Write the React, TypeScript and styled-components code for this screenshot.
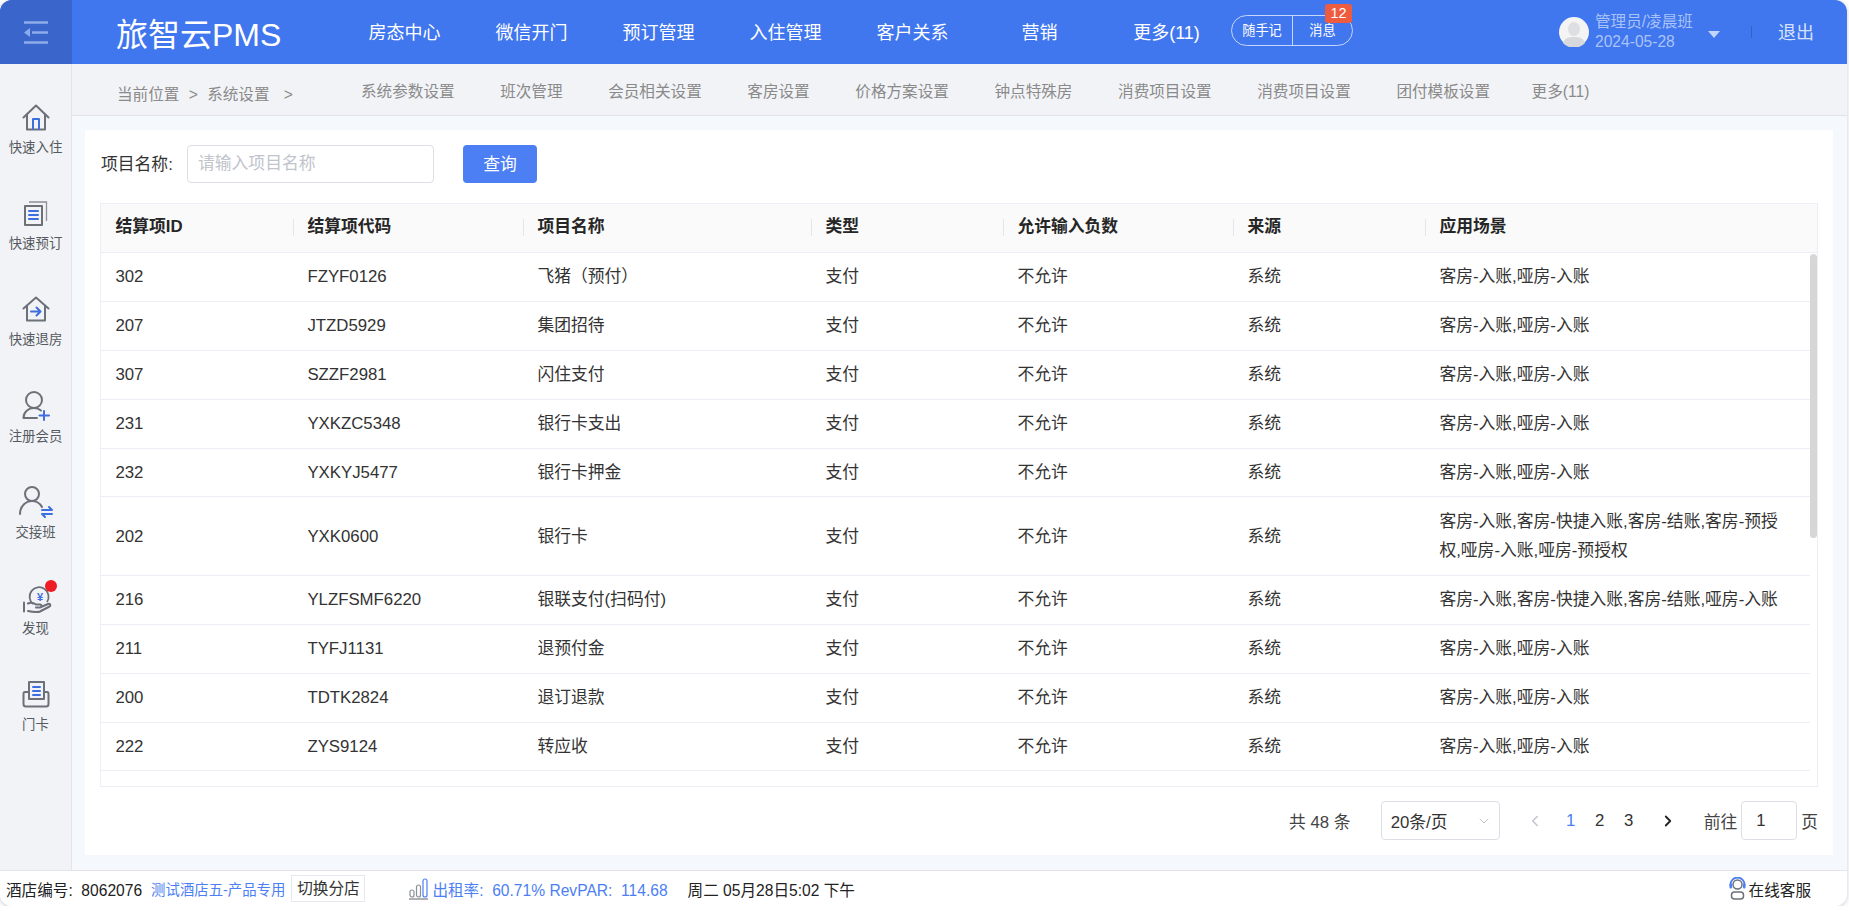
import styled, { createGlobalStyle } from "styled-components"
import { ChevronDown, ChevronLeft, ChevronRight } from "lucide-react"

const GlobalStyle = createGlobalStyle`
    html, body {
        margin: 0;
        background: #fff;
        font-family: "Liberation Sans", "Noto Sans CJK SC", sans-serif;
        overflow: hidden;
    }
`

const Shell = styled.div`
    width: 1847px;
    height: 906px;
    display: flex;
    flex-direction: column;
    border-radius: 12px;
    overflow: hidden;
    box-shadow: 0 1px 4px rgba(70, 70, 110, 0.3);
    background: #f5f8fd;
`

/* header */
const Header = styled.header`
    height: 64px;
    flex-shrink: 0;
    display: flex;
    align-items: center;
    background: #4076ee;
    color: #fff;
`
const MenuBtn = styled.div`
    width: 72px;
    height: 64px;
    flex-shrink: 0;
    background: #3a66cc;
    display: flex;
    align-items: center;
    justify-content: center;
`
const Logo = styled.div`
    width: 269px;
    flex-shrink: 0;
    box-sizing: border-box;
    padding-left: 44px;
    font-size: 32px;
    white-space: nowrap;
`
const NavItem = styled.div`
    width: 127px;
    flex-shrink: 0;
    box-sizing: border-box;
    padding-bottom: 2px;
    text-align: center;
    font-size: 18px;
    white-space: nowrap;
`
const NoteGroup = styled.div`
    position: relative;
    margin: -3px 0 0 1px;
    width: 122px;
    height: 31px;
    display: flex;
    border: 1px solid #c5d6fa;
    border-radius: 16px;
    box-sizing: border-box;
    font-size: 13.2px;
    line-height: 29px;
`
const NoteBtn = styled.div<{ $wide?: boolean }>`
    flex: ${(p) => (p.$wide ? "1" : "0 0 60px")};
    text-align: center;
    & + & {
        border-left: 1px solid #c5d6fa;
    }
`
const Badge = styled.span`
    position: absolute;
    top: -12px;
    right: 0;
    width: 27px;
    height: 19px;
    border-radius: 3px;
    background: #ee5c3f;
    font-size: 14.4px;
    line-height: 19px;
    text-align: center;
`
const UserBox = styled.div`
    margin-left: auto;
    display: flex;
    align-items: center;
    padding-right: 33px;
`
const Avatar = styled.svg`
    width: 30px;
    height: 30px;
    display: block;
`
const UserText = styled.div`
    margin-left: 6px;
    color: #a9c3f7;
    font-size: 15.6px;
    line-height: 20px;
    white-space: nowrap;
    width: 99px;
`
const Caret = styled.span`
    margin-left: 14px;
    margin-top: 4px;
    width: 0;
    height: 0;
    border-left: 6px solid transparent;
    border-right: 6px solid transparent;
    border-top: 7px solid #c3d5fa;
`
const Divider = styled.span`
    margin-left: 31px;
    width: 1px;
    height: 12px;
    background: #3462c8;
`
const Logout = styled.div`
    margin-left: 26px;
    padding-bottom: 2px;
    font-size: 18px;
    color: #d6e2fb;
`

/* middle */
const Middle = styled.div`
    flex: 1;
    min-height: 0;
    display: flex;
`
const Sidebar = styled.aside`
    width: 72px;
    flex-shrink: 0;
    box-sizing: border-box;
    padding-top: 36px;
    background: #f2f3f7;
    border-right: 1px solid #e3e5ec;
`
const SideItem = styled.div`
    height: 96.2px;
    display: flex;
    flex-direction: column;
    align-items: center;
`
const SideIcon = styled.div`
    position: relative;
    width: 36px;
    height: 34px;
    display: flex;
    align-items: center;
    justify-content: center;
    margin-bottom: 4px;
`
const SideLabel = styled.div`
    font-size: 13.4px;
    line-height: 20px;
    color: #555a60;
    white-space: nowrap;
`
const RedDot = styled.span`
    position: absolute;
    top: -1px;
    right: -3px;
    width: 12px;
    height: 12px;
    border-radius: 50%;
    background: #ee1c25;
`
const Main = styled.main`
    flex: 1;
    min-width: 0;
    display: flex;
    flex-direction: column;
`
const SubNav = styled.nav`
    height: 52px;
    flex-shrink: 0;
    box-sizing: border-box;
    padding-left: 45px;
    display: flex;
    align-items: center;
    background: #f2f3f7;
    border-bottom: 1px solid #e2e3e8;
    color: #8a8a8a;
    font-size: 15.6px;
    white-space: nowrap;
`
const Crumbs = styled.div`
    width: 244px;
    flex-shrink: 0;
    padding-top: 6px;
    word-spacing: 5px;
`
const CrumbEnd = styled.span`
    margin-left: 5px;
`
const SubItems = styled.div`
    display: flex;
    gap: 45.6px;
    padding-top: 1px;
    span:last-child {
        margin-left: -4px;
    }
`
const Content = styled.div`
    flex: 1;
    min-height: 0;
    padding: 14px 14px 15px 13px;
    display: flex;
`
const Panel = styled.section`
    flex: 1;
    min-width: 0;
    box-sizing: border-box;
    padding: 15px 15px 0;
    background: #fff;
    display: flex;
    flex-direction: column;
`
const SearchRow = styled.div`
    height: 38px;
    display: flex;
    align-items: center;
    font-size: 16.8px;
    color: #333;
    margin-bottom: 20px;
`
const SearchLabel = styled.label`
    width: 87px;
    flex-shrink: 0;
    padding: 0 0 2px 1px;
    box-sizing: border-box;
`
const SearchInput = styled.input`
    width: 247px;
    height: 38px;
    box-sizing: border-box;
    padding: 0 10px;
    border: 1px solid #dcdfe6;
    border-radius: 4px;
    font: inherit;
    outline: none;
    &::placeholder {
        color: #c0c4cc;
        opacity: 1;
    }
`
const QueryBtn = styled.button`
    margin-left: 29px;
    width: 74px;
    height: 38px;
    padding: 0 0 3px;
    border: 0;
    border-radius: 4px;
    background: #4c7ff3;
    color: #fff;
    font: inherit;
`

/* table */
const cols = "192px 230px 288px 192px 230px 192px 1fr"

const Table = styled.div`
    height: 584px;
    flex-shrink: 0;
    box-sizing: border-box;
    border: 1px solid #ebeef5;
    display: flex;
    flex-direction: column;
    overflow: hidden;
`
const HeadRow = styled.div`
    height: 48px;
    flex-shrink: 0;
    display: grid;
    grid-template-columns: ${cols};
    background: #fafafa;
    border-bottom: 1px solid #ebeef5;
`
const HeadCell = styled.div`
    position: relative;
    padding-left: 14.4px;
    font-size: 16.8px;
    font-weight: 700;
    line-height: 46px;
    color: #262626;
    white-space: nowrap;
    & + &::before {
        content: "";
        position: absolute;
        left: 0;
        top: 15px;
        height: 17px;
        width: 1px;
        background: #e6e6e6;
    }
`
const TableBody = styled.div`
    position: relative;
    flex: 1;
    min-height: 0;
    overflow: hidden;
    padding-right: 7px;
`
const Row = styled.div<{ $h: number }>`
    height: ${(p) => p.$h}px;
    box-sizing: border-box;
    display: grid;
    grid-template-columns: ${cols};
    align-items: center;
    border-bottom: 1px solid #ebeef5;
`
const Cell = styled.div`
    padding: 0 14.4px;
    font-size: 16.8px;
    line-height: 29.3px;
    color: #333;
`
const ScrollThumb = styled.div`
    position: absolute;
    top: 1px;
    right: 0;
    width: 7px;
    height: 284px;
    border-radius: 4px;
    background: #d6d6d6;
`

/* pagination */
const Pager = styled.div`
    margin-top: 14px;
    height: 39px;
    display: flex;
    align-items: center;
    justify-content: flex-end;
    font-size: 16.8px;
    color: #444;
    white-space: nowrap;
`
const Total = styled.span`
    margin-right: 30px;
`
const SizeSelect = styled.div`
    width: 119.5px;
    height: 39px;
    box-sizing: border-box;
    padding: 0 7px 0 9px;
    border: 1px solid #dcdfe6;
    border-radius: 4px;
    display: flex;
    align-items: center;
    justify-content: space-between;
    color: #333;
`
const PageArrow = styled.span<{ $gap: number; $off?: boolean }>`
    margin-left: ${(p) => p.$gap}px;
    width: 33px;
    display: flex;
    justify-content: center;
    color: ${(p) => (p.$off ? "#c0c4cc" : "#222")};
`
const PageNums = styled.div`
    margin-left: 5px;
    display: flex;
`
const PageNum = styled.span<{ $active?: boolean }>`
    width: 29px;
    text-align: center;
    color: ${(p) => (p.$active ? "#4c7ff3" : "#333")};
`
const Goto = styled.span`
    margin-left: 19.5px;
`
const GotoInput = styled.div`
    margin: 0 4px;
    width: 56px;
    height: 39px;
    box-sizing: border-box;
    padding-left: 14px;
    border: 1px solid #dcdfe6;
    border-radius: 4px;
    line-height: 37px;
    color: #333;
`

/* footer */
const Footer = styled.footer`
    height: 36px;
    flex-shrink: 0;
    box-sizing: border-box;
    padding: 0 36px 0 6px;
    display: flex;
    align-items: center;
    background: #fff;
    border-top: 1px solid #e2e4ea;
    font-size: 15.6px;
    color: #222;
    white-space: nowrap;
`
const HotelName = styled.span`
    margin-left: 9px;
    font-size: 14.4px;
    color: #4c7ff3;
`
const SwitchBtn = styled.span`
    margin-left: 6px;
    width: 74px;
    height: 27px;
    box-sizing: border-box;
    border: 1px solid #e6e8f0;
    text-align: center;
    line-height: 25px;
    color: #333;
`
const Stats = styled.div`
    margin-left: 44px;
    display: flex;
    align-items: center;
    gap: 4px;
    color: #4c7ff3;
`
const ClockText = styled.span`
    margin-left: 20px;
`
const Service = styled.div`
    margin-left: auto;
    display: flex;
    align-items: center;
    gap: 3px;
`

const Line = ({ d, blue }: { d: string; blue?: boolean }) => (
    <path d={d} fill="none" stroke={blue ? "#3d6fe0" : "#6b7079"} strokeWidth="2" strokeLinecap="round" strokeLinejoin="round" />
)

const sideItems = [
    {
        label: "快速入住",
        icon: (
            <svg width="28" height="27" viewBox="0 0 28 27">
                <Line d="M1.5 13.5 14 1.5l12.5 12" />
                <Line d="M5 10.5V25.5H23V10.5" />
                <Line blue d="M11 25V15H17V25" />
            </svg>
        ),
    },
    {
        label: "快速预订",
        icon: (
            <svg width="25" height="26" viewBox="0 0 25 26">
                <Line d="M2 6H19V25H2Z" />
                <path d="M6 2H23.5V21" fill="none" stroke="#8b8f97" strokeWidth="1.3" />
                <Line blue d="M6 11H15M6 15H15M6 19H15" />
            </svg>
        ),
    },
    {
        label: "快速退房",
        icon: (
            <svg width="28" height="26" viewBox="0 0 28 26">
                <Line d="M1.5 12.5 14 1.5l12.5 11" />
                <Line d="M5 10V24.5H23V10" />
                <Line blue d="M9 15.5H18M14.5 11.5l4 4-4 4" />
            </svg>
        ),
    },
    {
        label: "注册会员",
        icon: (
            <svg width="28" height="30" viewBox="0 0 28 30">
                <circle cx="12" cy="9" r="8" fill="none" stroke="#6b7079" strokeWidth="2" />
                <Line d="M1.5 27c0-6 5-10 10.500-10 2.500 0 5 .8 7 2.500M1.500 27H15" />
                <Line blue d="M22 20V29M17.500 24.500H27" />
            </svg>
        ),
    },
    {
        label: "交接班",
        icon: (
            <svg width="36" height="32" viewBox="0 0 36 32">
                <circle cx="14" cy="8" r="7" fill="none" stroke="#6b7079" strokeWidth="2" />
                <Line d="M2 28c0-8 6-13 12-13 4 0 8 2.500 10 6" />
                <Line blue d="M24 24H34l-3-3M34 28H24l3 3" />
            </svg>
        ),
    },
    {
        label: "发现",
        dot: true,
        icon: (
            <svg width="32" height="30" viewBox="0 0 32 30">
                <path d="M13 21A9.500 9.500 0 1 1 27 19" fill="none" stroke="#6b7079" strokeWidth="1.800" />
                <text x="20" y="18" textAnchor="middle" fontSize="11" fontWeight="700" fill="#3d6fe0" fontFamily="Liberation Sans">¥</text>
                <Line d="M4 19.500V28.500" />
                <Line d="M8 20.500c3-1.500 6-.5 8 1h4c2 0 2 3 0 3h-4M21 24l7-3c2-.8 3 1.500 1.500 2.500L20 28.500c-3 1.200-7 .5-12-.5" />
            </svg>
        ),
    },
    {
        label: "门卡",
        icon: (
            <svg width="28" height="28" viewBox="0 0 28 28">
                <Line d="M7 19V2H22V19H7" />
                <Line blue d="M11 7H18M11 11H18M11 15H18" />
                <Line d="M7 12H3C2 12 1.500 13 1.500 14V24c0 1.500 1 2.500 2.500 2.500H24c1.500 0 2.500-1 2.500-2.500V14c0-1-.5-2-1.500-2H22" />
            </svg>
        ),
    },
]

const navItems = ["房态中心", "微信开门", "预订管理", "入住管理", "客户关系", "营销", "更多(11)"]
const subItems = ["系统参数设置", "班次管理", "会员相关设置", "客房设置", "价格方案设置", "钟点特殊房", "消费项目设置", "消费项目设置", "团付模板设置", "更多(11)"]
const headers = ["结算项ID", "结算项代码", "项目名称", "类型", "允许输入负数", "来源", "应用场景"]

const basic = "客房-入账,哑房-入账"
const rows = [
    { id: "302", code: "FZYF0126", name: "飞猪（预付）", scene: basic, h: 48.9 },
    { id: "207", code: "JTZD5929", name: "集团招待", scene: basic, h: 48.9 },
    { id: "307", code: "SZZF2981", name: "闪住支付", scene: basic, h: 48.9 },
    { id: "231", code: "YXKZC5348", name: "银行卡支出", scene: basic, h: 48.9 },
    { id: "232", code: "YXKYJ5477", name: "银行卡押金", scene: basic, h: 48.9 },
    { id: "202", code: "YXK0600", name: "银行卡", scene: "客房-入账,客房-快捷入账,客房-结账,客房-预授权,哑房-入账,哑房-预授权", h: 78.4 },
    { id: "216", code: "YLZFSMF6220", name: "银联支付(扫码付)", scene: "客房-入账,客房-快捷入账,客房-结账,哑房-入账", h: 48.9 },
    { id: "211", code: "TYFJ1131", name: "退预付金", scene: basic, h: 48.9 },
    { id: "200", code: "TDTK2824", name: "退订退款", scene: basic, h: 48.9 },
    { id: "222", code: "ZYS9124", name: "转应收", scene: basic, h: 48.9 },
    { id: "220", code: "ZZ3016", name: "转账", scene: basic, h: 54 },
]

function App() {
    return (
        <>
            <GlobalStyle />
            <Shell>
                <Header>
                    <MenuBtn>
                        <svg width="26" height="23" viewBox="0 0 26 23">
                            <path d="M1 1.500H25M9 11.500H25M1 21.500H25" stroke="#8eabea" strokeWidth="2.600" fill="none" />
                            <path d="M1 11.500 7 7V16Z" fill="#8eabea" />
                        </svg>
                    </MenuBtn>
                    <Logo>旅智云PMS</Logo>
                    {navItems.map((item) => (
                        <NavItem key={item}>{item}</NavItem>
                    ))}
                    <NoteGroup>
                        <NoteBtn>随手记</NoteBtn>
                        <NoteBtn $wide>消息</NoteBtn>
                        <Badge>12</Badge>
                    </NoteGroup>
                    <UserBox>
                        <Avatar viewBox="0 0 30 30">
                            <circle cx="15" cy="15" r="15" fill="#f4f4f4" />
                            <ellipse cx="15" cy="12" rx="6" ry="7" fill="#dedfe2" />
                            <path d="M4 26c1-5 6-6 11-6s10 1 11 6a15 15 0 0 1-22 0Z" fill="#d8d9dc" />
                        </Avatar>
                        <UserText>
                            管理员/凌晨班
                            <br />
                            2024-05-28
                        </UserText>
                        <Caret />
                        <Divider />
                        <Logout>退出</Logout>
                    </UserBox>
                </Header>
                <Middle>
                    <Sidebar>
                        {sideItems.map((item) => (
                            <SideItem key={item.label}>
                                <SideIcon>
                                    {item.icon}
                                    {item.dot && <RedDot />}
                                </SideIcon>
                                <SideLabel>{item.label}</SideLabel>
                            </SideItem>
                        ))}
                    </Sidebar>
                    <Main>
                        <SubNav>
                            <Crumbs>当前位置 &gt; 系统设置 <CrumbEnd>&gt;</CrumbEnd></Crumbs>
                            <SubItems>
                                {subItems.map((item, i) => (
                                    <span key={i}>{item}</span>
                                ))}
                            </SubItems>
                        </SubNav>
                        <Content>
                            <Panel>
                                <SearchRow>
                                    <SearchLabel>项目名称:</SearchLabel>
                                    <SearchInput placeholder="请输入项目名称" />
                                    <QueryBtn>查询</QueryBtn>
                                </SearchRow>
                                <Table>
                                    <HeadRow>
                                        {headers.map((h) => (
                                            <HeadCell key={h}>{h}</HeadCell>
                                        ))}
                                    </HeadRow>
                                    <TableBody>
                                        {rows.map((r) => (
                                            <Row key={r.id} $h={r.h}>
                                                <Cell>{r.id}</Cell>
                                                <Cell>{r.code}</Cell>
                                                <Cell>{r.name}</Cell>
                                                <Cell>支付</Cell>
                                                <Cell>不允许</Cell>
                                                <Cell>系统</Cell>
                                                <Cell>{r.scene}</Cell>
                                            </Row>
                                        ))}
                                        <ScrollThumb />
                                    </TableBody>
                                </Table>
                                <Pager>
                                    <Total>共 48 条</Total>
                                    <SizeSelect>
                                        20条/页
                                        <ChevronDown size={16} color="#c0c4cc" strokeWidth={1.5} />
                                    </SizeSelect>
                                    <PageArrow $gap={18} $off>
                                        <ChevronLeft size={18} strokeWidth={2} />
                                    </PageArrow>
                                    <PageNums>
                                        <PageNum $active>1</PageNum>
                                        <PageNum>2</PageNum>
                                        <PageNum>3</PageNum>
                                    </PageNums>
                                    <PageArrow $gap={8}>
                                        <ChevronRight size={18} strokeWidth={2.4} />
                                    </PageArrow>
                                    <Goto>前往</Goto>
                                    <GotoInput>1</GotoInput>
                                    <span>页</span>
                                </Pager>
                            </Panel>
                        </Content>
                    </Main>
                </Middle>
                <Footer>
                    <span>酒店编号:&nbsp;&nbsp;8062076</span>
                    <HotelName>测试酒店五-产品专用</HotelName>
                    <SwitchBtn>切换分店</SwitchBtn>
                    <Stats>
                        <svg width="19" height="22" viewBox="0 0 19 22">
                            <rect x="1" y="12" width="4" height="7" rx="2" fill="none" stroke="#8b8f97" strokeWidth="1.200" />
                            <rect x="7.500" y="7" width="4" height="12" rx="2" fill="none" stroke="#8b8f97" strokeWidth="1.200" />
                            <rect x="14" y="1" width="4" height="18" rx="2" fill="none" stroke="#4c7ff3" strokeWidth="1.200" />
                            <path d="M0 21H19" stroke="#8b8f97" strokeWidth="1.400" />
                        </svg>
                        <span>出租率:&nbsp;&nbsp;60.71% RevPAR:&nbsp;&nbsp;114.68</span>
                    </Stats>
                    <ClockText>周二 05月28日5:02 下午</ClockText>
                    <Service>
                        <svg width="17" height="23" viewBox="0 0 17 23">
                            <circle cx="8.500" cy="7.500" r="4.500" fill="none" stroke="#6b7079" strokeWidth="1.500" />
                            <path d="M1.500 9V7.500a7 7 0 0 1 14 0V9" fill="none" stroke="#4c7ff3" strokeWidth="1.800" />
                            <rect x="0.500" y="6.500" width="2.500" height="5" rx="1" fill="#4c7ff3" />
                            <rect x="14" y="6.500" width="2.500" height="5" rx="1" fill="#4c7ff3" />
                            <rect x="2.500" y="15" width="12" height="7" rx="3" fill="none" stroke="#6b7079" strokeWidth="1.500" />
                        </svg>
                        <span>在线客服</span>
                    </Service>
                </Footer>
            </Shell>
        </>
    )
}

export default App
